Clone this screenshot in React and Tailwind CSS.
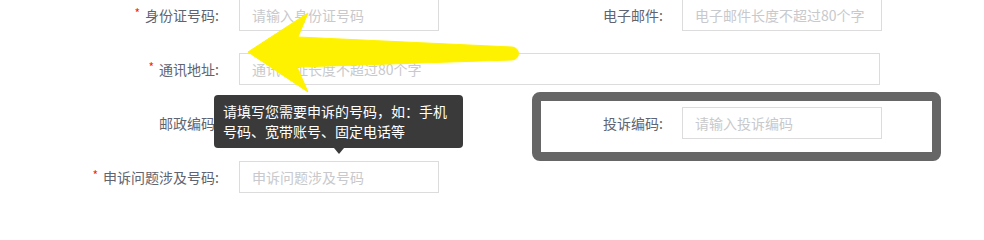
const font = { fontFamily: '"Noto Sans CJK SC", "Liberation Sans", sans-serif' };

function Label({ text, required, width }) {
  return (
    <div className={`${width} shrink-0 flex items-center justify-end text-sm text-[#5f6470]`}>
      {required && <span className="text-[#f5222d] text-xs mr-[5px] -mt-1">*</span>}
      <span>{text}:</span>
    </div>
  );
}

function Field({ placeholder, width = 'w-[200px]' }) {
  return (
    <input
      readOnly
      placeholder={placeholder}
      className={`${width} h-8 border border-[#dcdcdc] bg-white px-3 text-sm text-[#333] placeholder:text-[#c8c9cc] outline-none`}
    />
  );
}

export default function App() {
  return (
    <div className="relative w-[984px] h-[209px] overflow-hidden bg-white" style={font}>
      <div className="flex flex-col gap-[22px] -mt-px">
        <div className="flex">
          <Label text="身份证号码" required width="w-[219px]" />
          <div className="ml-5"><Field placeholder="请输入身份证号码" /></div>
          <Label text="电子邮件" width="w-[224px]" />
          <div className="ml-[19px]"><Field placeholder="电子邮件长度不超过80个字" /></div>
        </div>
        <div className="flex">
          <Label text="通讯地址" required width="w-[219px]" />
          <div className="ml-5"><Field placeholder="通讯地址长度不超过80个字" width="w-[641px]" /></div>
        </div>
        <div className="flex">
          <Label text="邮政编码" width="w-[219px]" />
          <div className="ml-5"><Field placeholder="邮政编码一般为6位数" /></div>
          <Label text="投诉编码" width="w-[224px]" />
          <div className="ml-[19px]"><Field placeholder="请输入投诉编码" /></div>
        </div>
        <div className="flex">
          <Label text="申诉问题涉及号码" required width="w-[219px]" />
          <div className="ml-5"><Field placeholder="申诉问题涉及号码" /></div>
        </div>
      </div>

      {/* annotation frame */}
      <div className="absolute left-[532px] top-[92px] w-[409px] h-[69px] border-[9px] border-[#666666] rounded-[8px]" />

      {/* tooltip */}
      <div className="absolute left-[214px] top-[95px] w-[249px] h-[53px] rounded bg-[#3a3a3a] px-[9px] pt-[6px] text-sm leading-5 text-white">
        请填写您需要申诉的号码，如：手机号码、宽带账号、固定电话等
        <span className="absolute left-[120px] top-[53px] w-0 h-0 border-x-[5px] border-x-transparent border-t-[6px] border-t-[#3a3a3a]" />
      </div>

      {/* yellow arrow */}
      <svg className="absolute left-0 top-0" width="984" height="209" viewBox="0 0 984 209">
        <path
          d="M248 52 L308 13 L298 37 L512 47 A6.5 6.5 0 0 1 512 60 L297 67 L308 92 Z"
          fill="#fff200"
          stroke="#fff200"
          strokeWidth="1"
          strokeLinejoin="round"
        />
      </svg>
    </div>
  );
}
